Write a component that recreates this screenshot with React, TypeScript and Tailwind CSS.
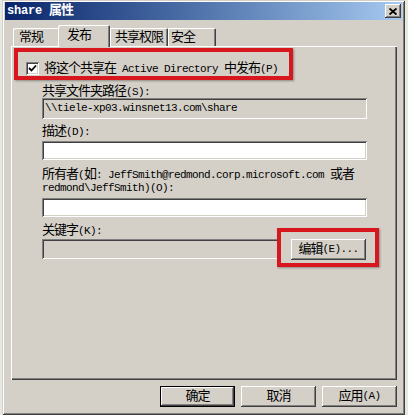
import React from "react";

const CJK = /([\u3400-\u9fff\uff01-\uff5e]+)/;

function M({ t }: { t: string }) {
  const parts = t.split(CJK);
  return (
    <>
      {parts.map((p, i) =>
        p === "" ? null : /[\u3400-\u9fff\uff01-\uff5e]/.test(p) ? (
          <span key={i} className="text-[13px] tracking-[-1px]">
            {p}
          </span>
        ) : (
          <span key={i} className="text-[11px] tracking-[-0.6px]">
            {p}
          </span>
        )
      )}
    </>
  );
}

const raised =
  "shadow-[inset_-1px_-1px_0_#404040,inset_1px_1px_0_#ffffff,inset_-2px_-2px_0_#808080,inset_2px_2px_0_#d4d0c8]";
const sunken =
  "shadow-[inset_1px_1px_0_#808080,inset_-1px_-1px_0_#ffffff,inset_2px_2px_0_#404040,inset_-2px_-2px_0_#d4d0c8]";

function Btn({ label, def, className = "" }: { label: string; def?: boolean; className?: string }) {
  return (
    <div
      className={`flex h-[21px] w-[75px] items-center justify-center bg-[#d4d0c8] leading-[13px] whitespace-pre ${
        def
          ? "border border-black shadow-[inset_-1px_-1px_0_#404040,inset_1px_1px_0_#ffffff,inset_-2px_-2px_0_#808080]"
          : raised
      } ${className}`}
    >
      <M t={label} />
    </div>
  );
}

export default function App() {
  return (
    <div
      className="relative h-[415px] w-[408px] overflow-hidden bg-[#e6e9e1] text-black"
      style={{ fontFamily: '"Liberation Mono", "Noto Sans CJK SC", monospace' }}
    >
      <div
        className={`ml-[2px] flex h-[415px] w-[403px] flex-col bg-[#d4d0c8] px-[3px] pt-[2px] shadow-[inset_1px_1px_0_#d4d0c8,inset_-1px_-1px_0_#404040,inset_2px_2px_0_#ffffff,inset_-2px_-2px_0_#808080]`}
      >
        {/* Title bar */}
        <div className="flex h-[18px] items-center justify-between bg-linear-to-r from-[#0a246a] to-[#a6caf0] pl-[2px] pr-[1px]">
          <div className="flex items-center font-bold leading-[14px] whitespace-pre text-white">
            <span className="text-[12px] tracking-[-0.2px]">share </span>
            <span className="text-[13px] tracking-[-1px]">属性</span>
          </div>
          <div className={`flex h-[14px] w-[16px] items-center justify-center bg-[#d4d0c8] ${raised}`}>
            <svg width="8" height="7" viewBox="0 0 8 7">
              <path d="M0.5 0.5 L7.5 6.5 M7.5 0.5 L0.5 6.5" stroke="#000" strokeWidth="1.8" />
            </svg>
          </div>
        </div>

        {/* Tabs */}
        <div className="mt-[5px] ml-[8px] flex h-[21px] items-end">
          <div className="flex h-[18px] w-[47px] items-center rounded-tl-[2px] pl-[6px] leading-[13px] shadow-[inset_1px_1px_0_#ffffff]">
            <M t="常规" />
          </div>
          <div className="relative z-10 -ml-[2px] -mb-[1px] flex h-[22px] w-[52px] items-start rounded-t-[2px] bg-[#d4d0c8] pt-[4px] pl-[9px] leading-[13px] shadow-[inset_1px_1px_0_#ffffff,inset_-1px_0_0_#404040,inset_-2px_0_0_#808080]">
            <M t="发布" />
          </div>
          <div className="flex h-[18px] w-[58px] items-center rounded-tr-[2px] pl-[5px] leading-[13px] shadow-[inset_1px_1px_0_#ffffff,inset_-1px_0_0_#404040,inset_-2px_0_0_#808080]">
            <M t="共享权限" />
          </div>
          <div className="flex h-[18px] w-[48px] items-center rounded-tr-[2px] pl-[3px] leading-[13px] shadow-[inset_1px_1px_0_#ffffff,inset_-1px_0_0_#404040,inset_-2px_0_0_#808080]">
            <M t="安全" />
          </div>
        </div>

        {/* Panel */}
        <div className="ml-[6px] flex h-[334px] w-[386px] flex-col pt-[16px] pl-[31px] shadow-[inset_1px_1px_0_#ffffff,inset_-1px_-1px_0_#404040,inset_-2px_-2px_0_#808080]">
          <div className="-ml-[16px] flex h-[13px] items-center leading-[13px] whitespace-pre">
            <div className={`flex h-[13px] w-[13px] items-center justify-center bg-white ${sunken}`}>
              <svg width="9" height="9" viewBox="0 0 9 9">
                <path d="M1 4 L3.5 6.5 L8 1.5" stroke="#000" strokeWidth="1.8" fill="none" />
              </svg>
            </div>
            <div className="ml-[5px]">
              <M t="将这个共享在 Active Directory 中发布(P)" />
            </div>
          </div>

          <div className="mt-[10px] h-[13px] leading-[13px] whitespace-pre">
            <M t="共享文件夹路径(S):" />
          </div>
          <div className={`flex h-[21px] w-[325px] items-center bg-[#d4d0c8] pl-[3px] leading-[13px] whitespace-pre ${sunken}`}>
            <M t="\\tiele-xp03.winsnet13.com\share" />
          </div>

          <div className="mt-[6px] h-[13px] leading-[13px] whitespace-pre">
            <M t="描述(D):" />
          </div>
          <div className={`mt-[3px] h-[19px] w-[325px] bg-white ${sunken}`} />

          <div className="mt-[8px] leading-[12px] whitespace-pre">
            <div>
              <M t="所有者(如: JeffSmith@redmond.corp.microsoft.com 或者" />
            </div>
            <div>
              <M t="redmond\JeffSmith)(O):" />
            </div>
          </div>
          <div className={`mt-[4px] h-[19px] w-[325px] bg-white ${sunken}`} />

          <div className="mt-[7px] h-[13px] leading-[13px] whitespace-pre">
            <M t="关键字(K):" />
          </div>
          <div className="mt-[2px] flex items-start">
            <div className={`h-[20px] w-[237px] bg-[#d4d0c8] ${sunken}`} />
            <Btn label="编辑(E)..." className="ml-[12px]" />
          </div>
        </div>

        {/* Bottom buttons */}
        <div className="mt-[6px] flex justify-end gap-[6px] pr-[5px]">
          <Btn label="确定" def />
          <Btn label="取消" />
          <Btn label="应用(A)" />
        </div>
      </div>

      {/* Red annotation boxes */}
      <div className="pointer-events-none absolute left-[14px] top-[48px] h-[32px] w-[279px] border-[4px] border-[#d8161e] shadow-[1px_1px_2px_rgba(0,0,0,0.35)]" />
      <div className="pointer-events-none absolute left-[277px] top-[228px] h-[39px] w-[102px] border-[4px] border-[#d8161e] shadow-[1px_1px_2px_rgba(0,0,0,0.35)]" />
    </div>
  );
}
